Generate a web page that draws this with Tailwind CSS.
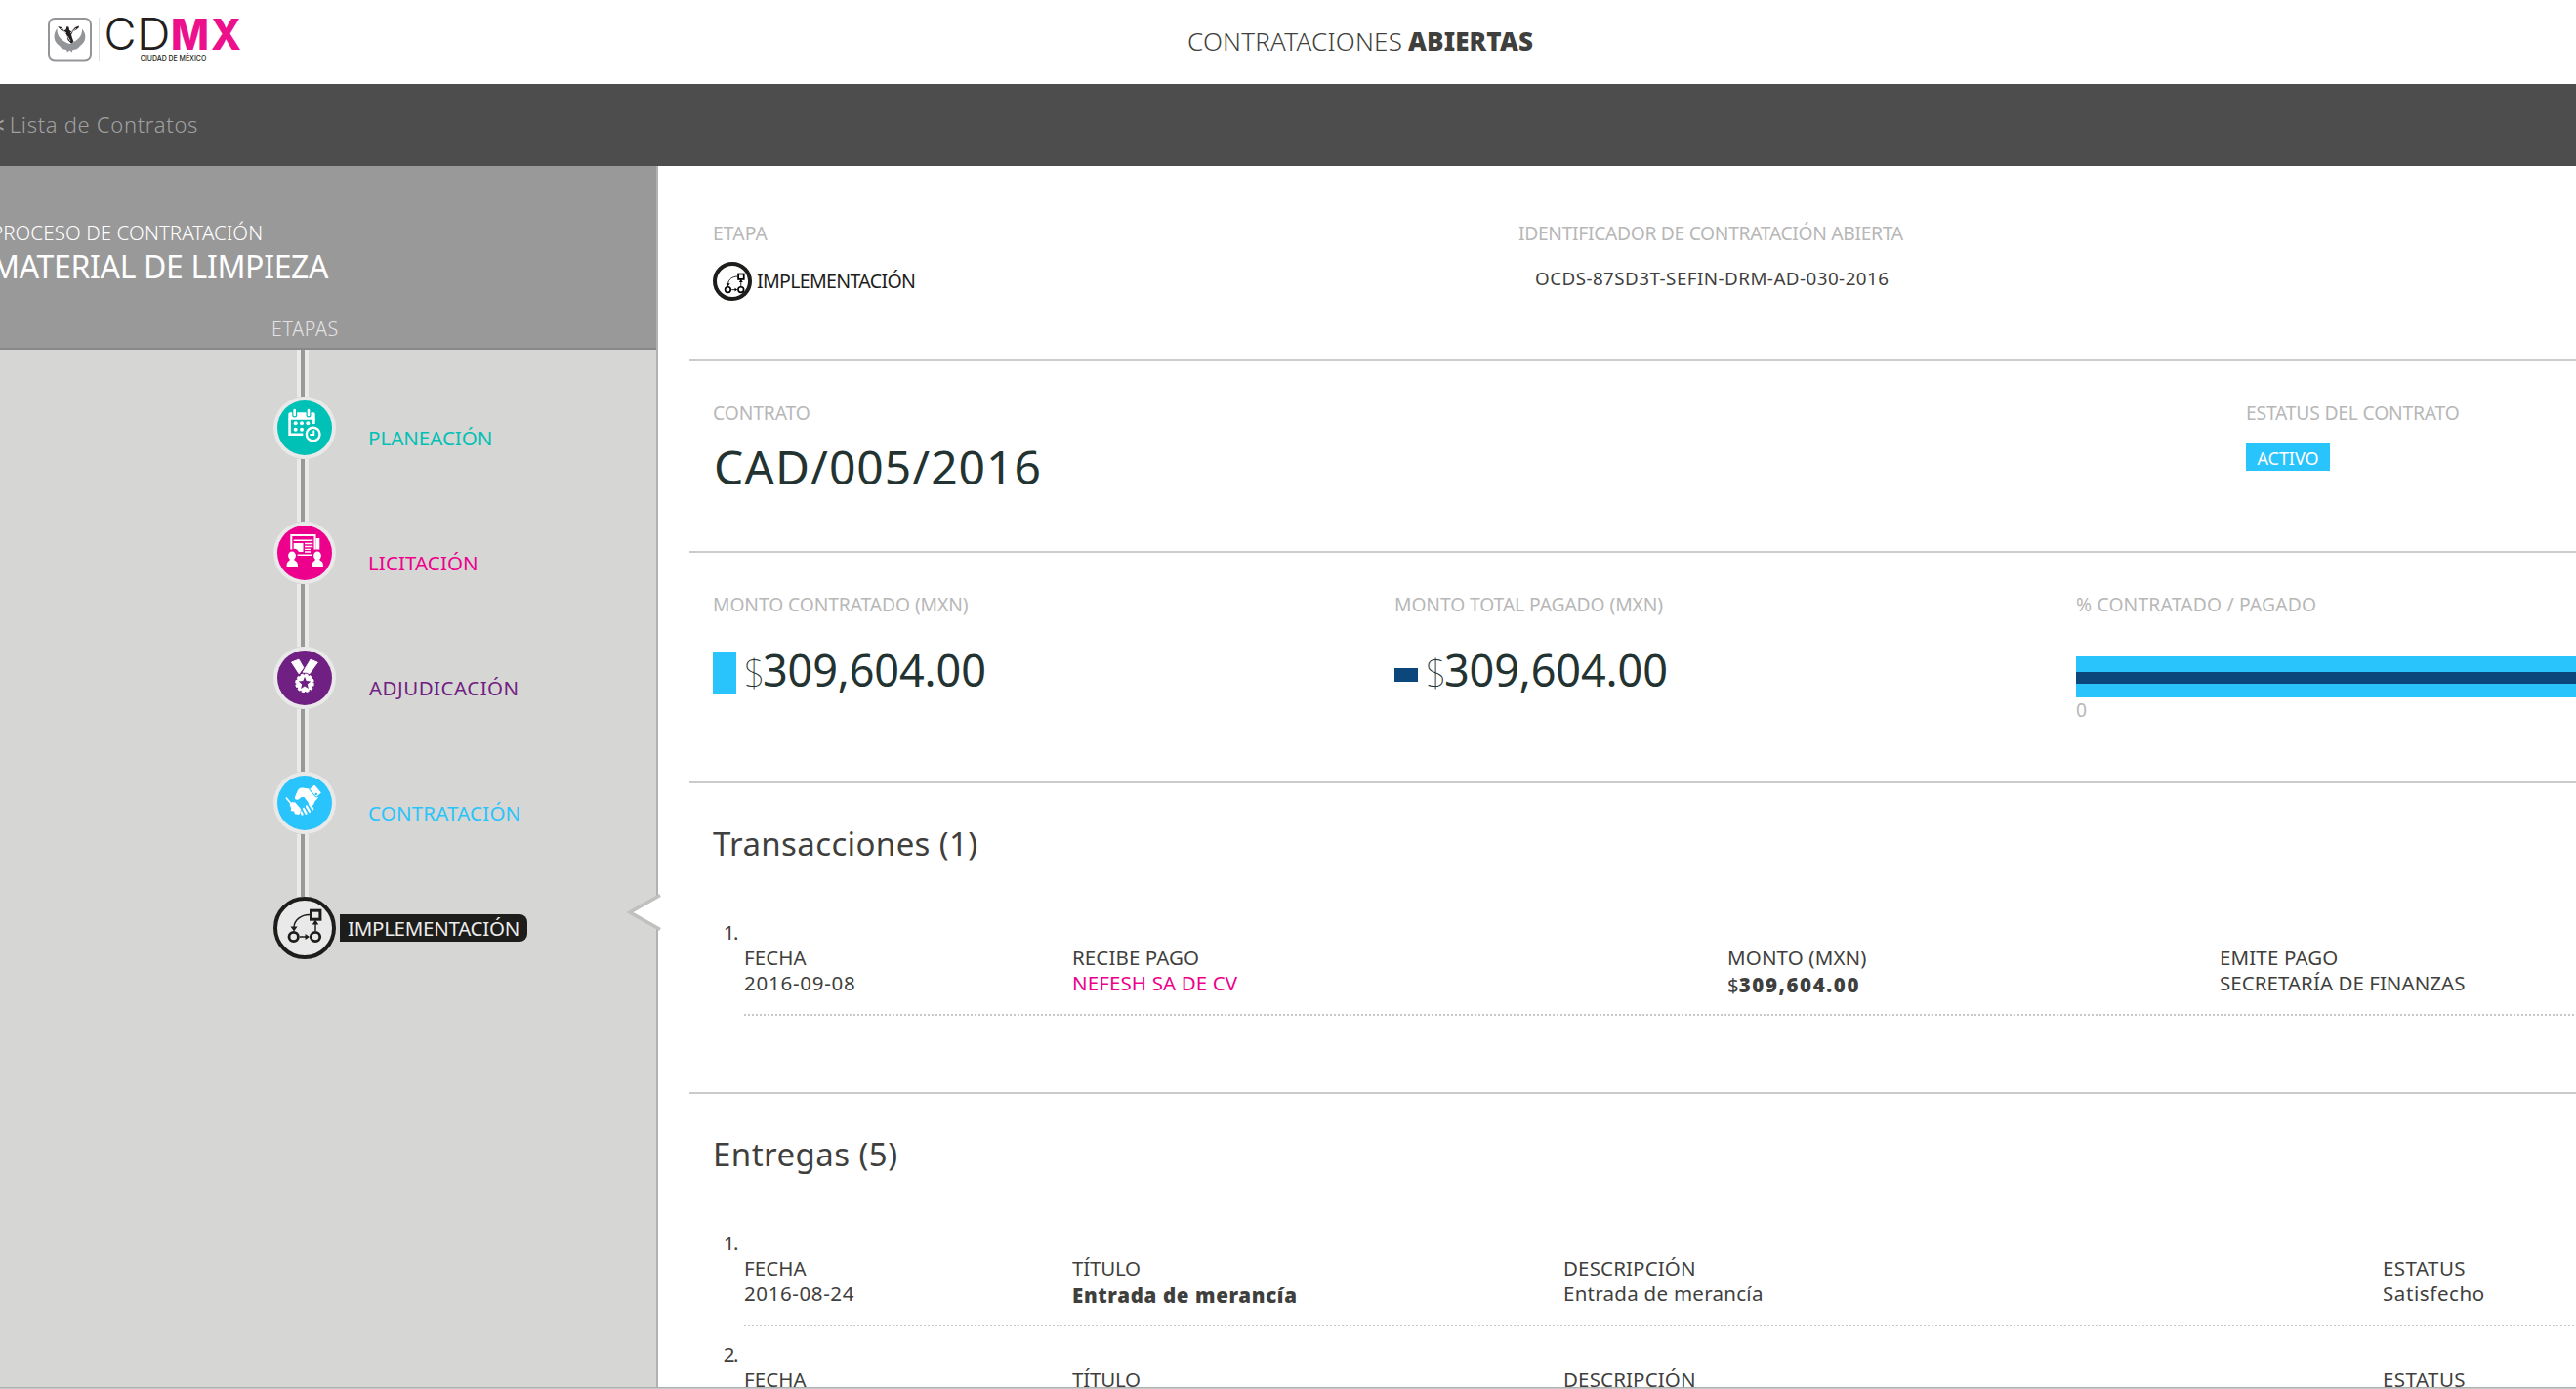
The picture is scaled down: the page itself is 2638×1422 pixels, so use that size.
<!DOCTYPE html>
<html lang="es">
<head>
<meta charset="utf-8">
<title>Contrataciones Abiertas</title>
<script src="https://cdn.jsdelivr.net/npm/@tailwindcss/browser@4"></script>
</head>
<body class="flex h-[1422px] w-[2638px] flex-col overflow-hidden bg-white font-['Noto_Sans',sans-serif] text-[20.5px] leading-[26px] text-[#3f3f3e] whitespace-nowrap">

<svg class="hidden">
  <symbol id="flow" viewBox="0 0 64 64">
    <g fill="none" stroke="currentColor">
      <rect x="38.5" y="14.2" width="9.4" height="9" stroke-width="3"/>
      <circle cx="20.7" cy="41" r="4.7" stroke-width="2.8"/>
      <circle cx="43" cy="41" r="4.7" stroke-width="2.8"/>
      <path d="M37 18.5C28 18.500 21.500 24 21 31M43 35V28M27 41h8" stroke-width="1.4"/>
    </g>
    <path fill="currentColor" d="M17.500 30.500h7l-3.400 5zM39.700 28.500h6.600l-3.300-5zM32.500 38l4.500 3-4.500 3z"/>
  </symbol>
</svg>

<header class="flex h-[86px] shrink-0">
  <div class="w-[1216px] pt-4 pl-12">
    <svg width="202" height="50" viewBox="48 16 202 50">
      <rect x="50" y="19" width="43" height="42.500" rx="6" fill="#fff" stroke="#939598" stroke-width="2"/>
      <path fill="#939598" d="M58.500 29C54 35 54.500 43 61 47c2 3 5 4 7 4l1 2.500 2.300-2 2.300 2 1-2.500c3 0 5-1 7.500-4C88.500 43 89 35 84 29.500c.5 7-4 12.500-12.500 15.500C63 42.500 58 37 58.500 29z"/>
      <path fill="#231f20" d="M59 27l4 1 2.500 3 2-.5 1-3.500 2 .8.500 3 2 1.700 4-4.500 4-1.500-.5 2-2.500 2-3 1.500-2 3.500 1 3.500 1.500 4-2.500 1.500-3.500-3.500-1-5-2.500-3.500-3-1z"/>
      <path d="M62 29l6 5M72 34l6-5M69 37l3 5" stroke="#fff" stroke-width=".8"/>
      <path d="M101.500 18v44" stroke="#dcdddd"/>
      <g font-family="Inter, sans-serif" font-size="44.500">
        <text x="106.500" y="50.500" font-weight="300" fill="#231f20" textLength="33" lengthAdjust="spacingAndGlyphs">C</text>
        <text x="140" y="50.500" font-weight="300" fill="#231f20" textLength="34.500" lengthAdjust="spacingAndGlyphs">D</text>
        <text x="175" y="50.500" font-weight="800" fill="#ec108c" textLength="39" lengthAdjust="spacingAndGlyphs">M</text>
        <text x="216" y="50.500" font-weight="800" fill="#ec108c" textLength="31" lengthAdjust="spacingAndGlyphs">X</text>
      </g>
      <text x="143.800" y="62" font-family="Inter, sans-serif" font-size="7.300" font-weight="500" fill="#231f20" textLength="67.500" lengthAdjust="spacingAndGlyphs">CIUDAD DE MÉXICO</text>
    </svg>
  </div>
  <h1 class="pt-6 text-[26px] leading-9 font-light tracking-[0.22px]">CONTRATACIONES <b class="-ml-px font-black tracking-[0.09px]">ABIERTAS</b></h1>
</header>

<nav class="flex h-[84px] shrink-0 items-center bg-[#4d4d4d] pb-0.5 text-[22px] text-[#a0a0a0]"><a class="-ml-2 flex"><span class="w-[17.8px] font-semibold">&lt;</span><span class="font-light tracking-[0.69px]">Lista de Contratos</span></a></nav>

<div class="flex h-[1250px] shrink-0 overflow-hidden">
  <aside class="relative w-[674px] shrink-0 border-r-2 border-[#b2b2b2] bg-[#d6d6d4]">
    <div class="h-[188px] border-b-2 border-[#888] bg-[#999] pt-[55px]">
      <p class="-ml-[9px] font-light tracking-[0.08px] text-white">PROCESO DE CONTRATACIÓN</p>
      <h2 class="mt-1 -ml-[9px] text-[32px] leading-9 tracking-[-0.34px] text-white">MATERIAL DE LIMPIEZA</h2>
      <p class="mt-[33px] ml-[278px] text-[19.5px] font-light tracking-[0.7px] text-[#e2e2e2]">ETAPAS</p>
    </div>

    <ol>
      <li>
        <div class="ml-[304px] h-12 w-3 border-x-4 border-[#e9ebea] bg-[#999]"></div>
        <div class="ml-[280px] flex h-16">
          <svg width="64" height="64" viewBox="0 0 64 64" class="shrink-0">
            <circle cx="32" cy="32" r="32" fill="#e9e9e9"/><circle cx="32" cy="32" r="28" fill="#00c1b5"/>
            <path d="M15.300 18q0-1.700 1.700-1.700h24q1.700 0 1.700 1.700v5.700H15.300z" fill="#fff"/>
            <path d="M16.600 22v16.800h13.700M41.400 22v6" fill="none" stroke="#fff" stroke-width="2.600"/>
            <path d="M21.700 15v4M36 15v4" stroke="#00c1b5" stroke-width="5" stroke-linecap="round"/>
            <path d="M21.700 14v5M36 14v5" stroke="#fff" stroke-width="2.600" stroke-linecap="round"/>
            <g fill="#fff"><circle cx="22.700" cy="27.300" r="2"/><circle cx="29" cy="27.300" r="2"/><circle cx="35.300" cy="27.300" r="2"/><circle cx="22.700" cy="33.700" r="2"/><circle cx="29" cy="33.700" r="2"/></g>
            <circle cx="40.700" cy="38.500" r="6.800" fill="#00c1b5" stroke="#fff" stroke-width="2.400"/>
            <path d="M41.300 34.500v4.500h-4" fill="none" stroke="#fff" stroke-width="1.800"/>
          </svg>
          <span class="mt-[29px] ml-[33px] text-[#00c1b5]">PLANEACIÓN</span>
        </div>
        <div class="ml-[304px] h-16 w-3 border-x-4 border-[#e9ebea] bg-[#999]"></div>
      </li>
      <li>
        <div class="ml-[280px] flex h-16">
          <svg width="64" height="64" viewBox="0 0 64 64" class="shrink-0">
            <circle cx="32" cy="32" r="32" fill="#e9e9e9"/><circle cx="32" cy="32" r="28" fill="#ec008c"/>
            <path d="M43.500 17h3.800v11.500h-3.800z" fill="#fff"/>
            <path d="M18.300 28.500V14h24.200v14.500" fill="none" stroke="#fff" stroke-width="2"/>
            <path d="M20.700 19.300h19.600M24.700 34.300h14.600" stroke="#fff" stroke-width="1.400"/>
            <path d="M20.700 22h9.800v9h-4.500q-2-4-5.300-3z" fill="#fff"/>
            <path d="M32 22.500h8.300M32 25.500h8.300M32 28.300h6M32 31h6" stroke="#fff" stroke-width="1.300"/>
            <g fill="#fff"><ellipse cx="19" cy="34.800" rx="3.900" ry="4.400"/><path d="M17 38h4q.3 2 2.300 2.700 1.700.8 1.700 5.300H13.500q0-4.500 1.700-5.300Q17 40 17 38z"/><ellipse cx="45" cy="34.800" rx="3.900" ry="4.400"/><path d="M43 38h4q.3 2 2.300 2.700 1.700.8 1.700 5.300H39.500q0-4.500 1.700-5.300Q43 40 43 38z"/></g>
          </svg>
          <span class="mt-[29px] ml-[33px] tracking-[0.1px] text-[#ec008c]">LICITACIÓN</span>
        </div>
        <div class="ml-[304px] h-16 w-3 border-x-4 border-[#e9ebea] bg-[#999]"></div>
      </li>
      <li>
        <div class="ml-[280px] flex h-16">
          <svg width="64" height="64" viewBox="0 0 64 64" class="shrink-0">
            <circle cx="32" cy="32" r="32" fill="#e9e9e9"/><circle cx="32" cy="32" r="28" fill="#702082"/>
            <g fill="#fff" stroke="#fff" stroke-linejoin="round" stroke-width="1">
              <path d="M18.500 16l7.500-2.800 4.800 8.300-4.600 6.300z"/><path d="M38 13.200l7.300 3-8.300 11.500q-3-2-6.800-1.500z"/>
              <circle cx="32" cy="37.300" r="8.300"/>
            </g>
            <circle cx="32" cy="37.300" r="8.600" fill="none" stroke="#fff" stroke-width="2.400" stroke-dasharray="3 1.500"/>
            <path fill="#702082" d="M32 30.800l1.700 4.300 4.600.3-3.500 3 1.100 4.500-3.900-2.500-3.900 2.500 1.100-4.500-3.500-3 4.600-.3z"/>
          </svg>
          <span class="mt-[29px] ml-[34px] tracking-[0.5px] text-[#702082]">ADJUDICACIÓN</span>
        </div>
        <div class="ml-[304px] h-16 w-3 border-x-4 border-[#e9ebea] bg-[#999]"></div>
      </li>
      <li>
        <div class="ml-[280px] flex h-16">
          <svg width="64" height="64" viewBox="0 0 64 64" class="shrink-0">
            <circle cx="32" cy="32" r="32" fill="#e9e9e9"/><circle cx="32" cy="32" r="28" fill="#29c4fb"/>
            <path fill="#fff" d="M25.500 28.500q-3.500 1-3.700-2l2.700-6.500q1.500-3.800 5-3.500l9 1.300 7.500 8.700-4 4.500q-.5 3.500-3.500 4.500L31.500 26h-2.700z"/>
            <path d="M37 33l3.200 5.200M34 35.500l3 5.300M31 38l2.500 4.800M28.500 41.500l1 2" stroke="#fff" stroke-width="2.300" stroke-linecap="round"/>
            <rect x="39.500" y="14" width="7.500" height="11.500" rx="1.200" fill="#fff" stroke="#29c4fb" stroke-width="1" transform="rotate(-41 43 20)"/>
            <circle cx="43.800" cy="23" r="1.200" fill="#29c4fb"/>
            <path d="M13.300 27l5 6" stroke="#fff" stroke-width="1.600" stroke-linecap="round"/>
            <path fill="#fff" d="M16.500 34l2.500-3 3.300.5 6 7-2 5.500-4.500-.7-.5-2.500-3.500-.8.300-3z"/>
          </svg>
          <span class="mt-[29px] ml-[33px] tracking-[0.19px] text-[#29c4fb]">CONTRATACIÓN</span>
        </div>
        <div class="ml-[304px] h-16 w-3 border-x-4 border-[#e9ebea] bg-[#999]"></div>
      </li>
      <li class="ml-[280px] flex h-16">
        <span class="size-16 shrink-0 rounded-full border-4 border-[#1d1d1b] bg-[#e9e9e9] text-[#1d1d1b]"><svg class="-m-1 size-16"><use href="#flow"/></svg></span>
        <span class="mt-[18px] ml-1 h-7 w-[192px] rounded-r-lg bg-[#1d1d1b] pl-2 leading-7 tracking-[-0.27px] text-[#ececec]">IMPLEMENTACIÓN</span>
      </li>
    </ol>

    <!-- notch pointing at the active stage -->
    <svg class="absolute top-[744px] left-[641px]" width="36" height="42" viewBox="0 0 36 42">
      <path d="M35 3v34L4 20z" fill="#fff"/><path d="M35 2.500L4 20l31 17.500" fill="none" stroke="#c0c0be" stroke-width="3.600"/><path d="M33 6.200v27.600h3V4.500z" fill="#fff"/>
    </svg>
  </aside>

  <main class="w-[2150px] shrink-0 pl-8">
    <section class="flex h-[200px] border-b-2 border-[#cbcbcb] pt-14 pl-6">
      <div class="w-[825px]">
        <p class="text-[19.3px] tracking-[0.1px] text-[#b7b7b7]">ETAPA</p>
        <div class="mt-4 flex h-10">
          <span class="size-10 rounded-full border-4 border-[#1d1d1b] text-black"><svg class="-mt-[0.200px] -ml-[1.200px] size-[38.4px]"><use href="#flow"/></svg></span>
          <span class="ml-[5px] pt-px text-[19.6px] leading-[37px] tracking-[-0.69px] text-[#1d1d1b]">IMPLEMENTACIÓN</span>
        </div>
      </div>
      <div class="w-[397px]">
        <p class="text-[19.3px] tracking-[-0.33px] text-[#b7b7b7]">IDENTIFICADOR DE CONTRATACIÓN ABIERTA</p>
        <p class="mt-[17px] pl-[17px] text-[18.8px] leading-[33px] tracking-[0.46px]">OCDS-87SD3T-SEFIN-DRM-AD-030-2016</p>
      </div>
    </section>

    <section class="flex h-[196px] border-b-2 border-[#cbcbcb] pt-10 pl-6">
      <div class="w-[1570px]">
        <p class="text-[19.3px] tracking-[-0.1px] text-[#b7b7b7]">CONTRATO</p>
        <p class="mt-3 pl-px text-[48px] leading-[60px] tracking-[1px] text-[#233331]">CAD/005/2016</p>
      </div>
      <div>
        <p class="text-[19.3px] tracking-[-0.2px] text-[#b7b7b7]">ESTATUS DEL CONTRATO</p>
        <p class="mt-[18px] h-7 w-[86px] bg-[#29c4fb] text-center text-[18px] leading-[30px] tracking-[-0.05px] text-white">ACTIVO</p>
      </div>
    </section>

    <section class="grid h-[236px] grid-cols-[698px_698px_698px] border-b-2 border-[#cbcbcb] pt-10 pl-6">
      <div>
        <p class="text-[19.3px] tracking-[-0.1px] text-[#b7b7b7]">MONTO CONTRATADO (MXN)</p>
        <p class="mt-9 flex h-[42px] items-start text-[45px] leading-9 tracking-[-0.13px] text-[#233331]"><i class="mr-2 h-[42px] w-6 bg-[#29c4fb]"></i><span class="w-[19px] text-[38px] leading-10 font-thin tracking-[-2px]">$</span>309,604.00</p>
      </div>
      <div>
        <p class="text-[19.3px] tracking-[-0.1px] text-[#b7b7b7]">MONTO TOTAL PAGADO (MXN)</p>
        <p class="mt-9 flex h-[42px] items-start text-[45px] leading-9 tracking-[-0.13px] text-[#233331]"><i class="mt-4 mr-2 h-[14px] w-6 bg-[#0b477b]"></i><span class="w-[19px] text-[38px] leading-10 font-thin tracking-[-2px]">$</span>309,604.00</p>
      </div>
      <div>
        <p class="text-[19.3px] tracking-[0.18px] text-[#b7b7b7]">% CONTRATADO / PAGADO</p>
        <div class="mt-10 h-[42px] bg-[#29c4fb] pt-4"><div class="h-3 bg-[#0b477b]"></div></div>
        <p class="text-[19.3px] leading-[25px] text-[#b7b7b7]">0</p>
      </div>
    </section>

    <section class="h-[318px] border-b-2 border-[#cbcbcb] pt-[37px] pl-6">
      <h3 class="text-[33px] leading-[50px] tracking-[0.38px]">Transacciones (1)</h3>
      <div class="mt-[52px] w-[25px] text-right tracking-[-1.5px]">1.</div>
      <div class="ml-8 grid grid-cols-[336px_671px_504px_503px]">
        <div><p class="tracking-[0.1px]">FECHA</p><p class="tracking-[0.75px]">2016-09-08</p></div>
        <div><p class="tracking-[0.1px]">RECIBE PAGO</p><p class="tracking-[0.12px] text-[#ec008c]">NEFESH SA DE CV</p></div>
        <div><p class="tracking-[0.14px]">MONTO (MXN)</p><p class="pt-0.5">$<b class="font-black tracking-[1.6px]">309,604.00</b></p></div>
        <div><p class="tracking-[0.14px]">EMITE PAGO</p><p class="tracking-[0.04px]">SECRETARÍA DE FINANZAS</p></div>
      </div>
      <div class="mt-[17px] ml-8 h-0.5 bg-[repeating-linear-gradient(90deg,#c8c8c8_0_2px,transparent_2px_4px)]"></div>
    </section>

    <section class="pt-[37px] pl-6">
      <h3 class="text-[33px] leading-[50px] tracking-[0.45px]">Entregas (5)</h3>
      <div class="mt-[52px] w-[25px] text-right tracking-[-1.5px]">1.</div>
      <div class="ml-8 grid grid-cols-[336px_503px_839px_336px]">
        <div><p class="tracking-[0.1px]">FECHA</p><p class="tracking-[0.6px]">2016-08-24</p></div>
        <div><p class="tracking-[-0.2px]">TÍTULO</p><p class="pt-0.5 font-black tracking-[0.65px]">Entrada de merancía</p></div>
        <div><p class="tracking-[0.14px]">DESCRIPCIÓN</p><p class="tracking-[0.27px]">Entrada de merancía</p></div>
        <div><p class="tracking-[0.45px]">ESTATUS</p><p class="tracking-[0.6px]">Satisfecho</p></div>
      </div>
      <div class="mt-[17px] ml-8 h-0.5 bg-[repeating-linear-gradient(90deg,#c8c8c8_0_2px,transparent_2px_4px)]"></div>
      <div class="mt-[15px] w-[25px] text-right tracking-[-1.5px]">2.</div>
      <div class="ml-8 grid grid-cols-[336px_503px_839px_336px]">
        <p class="tracking-[0.1px]">FECHA</p>
        <p class="tracking-[-0.2px]">TÍTULO</p>
        <p class="tracking-[0.14px]">DESCRIPCIÓN</p>
        <p class="tracking-[0.45px]">ESTATUS</p>
      </div>
    </section>
  </main>
</div>
<footer class="h-0.5 shrink-0 border-t border-[#b0b0b0] bg-[#c8c8c8]"></footer>
</body>
</html>
